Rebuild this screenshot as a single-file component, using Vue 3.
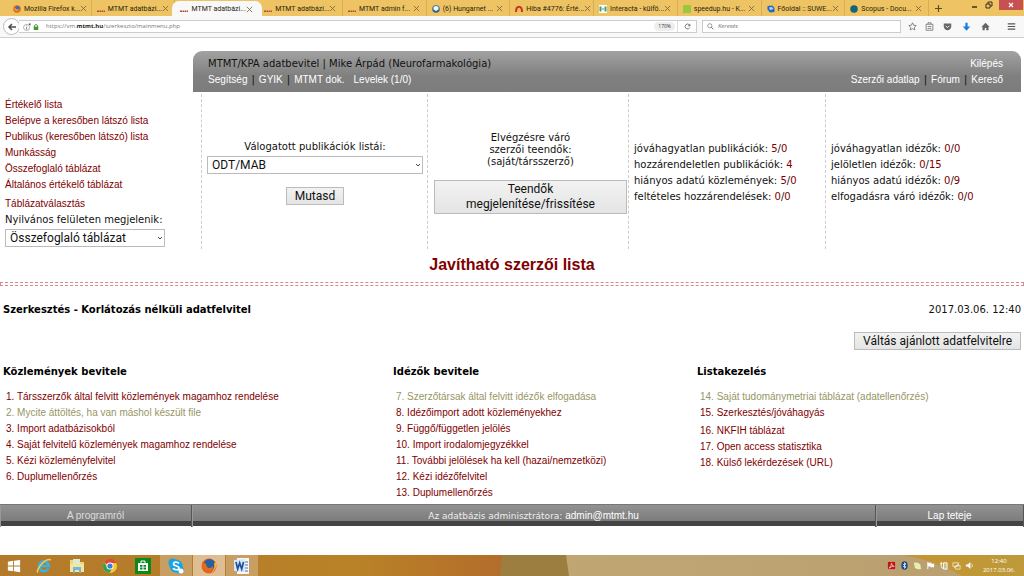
<script setup>
import { ref } from 'vue'

const tabs = [
  { icon: 'firefox', title: 'Mozilla Firefox k...' },
  { icon: 'mtmt', title: 'MTMT adatbázi...' },
  { icon: 'mtmt', title: 'MTMT adatbázi...', active: true },
  { icon: 'mtmt', title: 'MTMT adatbázi...' },
  { icon: 'mtmt', title: 'MTMT admin f...' },
  { icon: 'mail', title: '(6) Hungarnet ...' },
  { icon: 'redmine', title: 'Hiba #4776: Érté...' },
  { icon: 'interacta', title: 'Interacta - külfö...' },
  { icon: 'green', title: 'speedup.hu - K...' },
  { icon: 'suwe', title: 'Főoldal :: SUWE...' },
  { icon: 'scopus', title: 'Scopus - Docu...' },
]

const sideLinks = [
  'Értékelő lista',
  'Belépve a keresőben látszó lista',
  'Publikus (keresőben látszó) lista',
  'Munkásság',
  'Összefoglaló táblázat',
  'Általános értékelő táblázat',
]

const pubStats = [
  ['jóváhagyatlan publikációk:', '5', '0'],
  ['hozzárendeletlen publikációk:', '4'],
  ['hiányos adatú közlemények:', '5', '0'],
  ['feltételes hozzárendelések:', '0', '0'],
]
const citeStats = [
  ['jóváhagyatlan idézők:', '0', '0'],
  ['jelöletlen idézők:', '0', '15'],
  ['hiányos adatú idézők:', '0', '9'],
  ['elfogadásra váró idézők:', '0', '0'],
]

const menus = [
  {
    title: 'Közlemények bevitele',
    start: 1,
    items: [
      { text: 'Társszerzők által felvitt közlemények magamhoz rendelése' },
      { text: 'Mycite áttöltés, ha van máshol készült file', dim: true },
      { text: 'Import adatbázisokból' },
      { text: 'Saját felvitelű közlemények magamhoz rendelése' },
      { text: 'Kézi közleményfelvitel' },
      { text: 'Duplumellenőrzés' },
    ],
  },
  {
    title: 'Idézők bevitele',
    start: 7,
    items: [
      { text: 'Szerzőtársak által felvitt idézők elfogadása', dim: true },
      { text: 'Idézőimport adott közleményekhez' },
      { text: 'Függő/független jelölés' },
      { text: 'Import irodalomjegyzékkel' },
      { text: 'További jelölések ha kell (hazai/nemzetközi)' },
      { text: 'Kézi idézőfelvitel' },
      { text: 'Duplumellenőrzés' },
    ],
  },
  {
    title: 'Listakezelés',
    start: 14,
    items: [
      { text: 'Saját tudománymetriai táblázat (adatellenőrzés)', dim: true },
      { text: 'Szerkesztés/jóváhagyás' },
      { text: 'NKFIH táblázat', gap: true },
      { text: 'Open access statisztika' },
      { text: 'Külső lekérdezések (URL)' },
    ],
  },
]

const list = ref('ODT/MAB')
const table = ref('Összefoglaló táblázat')
</script>

<template>
  <div class="screen">
    <div class="tabbar">
      <div class="tabs">
        <div v-for="(t, i) in tabs" :key="i" class="tab" :class="{ active: t.active }">
          <svg class="fav" viewBox="0 0 16 16" aria-hidden="true">
            <template v-if="t.icon === 'firefox'">
              <circle cx="8" cy="8" r="7.5" fill="#e0661c" />
              <circle cx="9" cy="6.500" r="4.500" fill="#3a6fb5" />
              <path d="M1 5c3 0 4 2 6 3s4 2 6-1c0 5-6 7-9 4z" fill="#f0922a" />
            </template>
            <template v-else-if="t.icon === 'mtmt'">
              <path d="M0 11h4v3H0zM5 11h3v3H5zM9 11h3v3H9zM13 11h3v3h-3z" fill="#b5483c" />
            </template>
            <template v-else-if="t.icon === 'mail'">
              <circle cx="8" cy="8" r="7.500" fill="#2d6394" />
              <path d="M3 4q5-4 10 0v5L8 12 3 9z" fill="#f2f5f8" />
            </template>
            <template v-else-if="t.icon === 'redmine'">
              <path d="M2 14C2 0 14 0 14 14" fill="none" stroke="#c93422" stroke-width="4" />
            </template>
            <template v-else-if="t.icon === 'interacta'">
              <path d="M0 0h16v16H0z" fill="#fff" />
              <path d="M1 3h4v10H1zM11 3h4v10h-4z" fill="#4c9a6a" />
              <path d="M6 7h4v2H6z" fill="#4886b8" />
            </template>
            <template v-else-if="t.icon === 'green'">
              <path d="M0 0h16v16H0z" fill="#98c83c" />
            </template>
            <template v-else-if="t.icon === 'suwe'">
              <path d="M1 2l10-1 4 5v8l-9 1-5-6z" fill="#2468c0" />
              <path d="M4 5l6-1 3 4-7 2z" fill="#b8d4f0" />
            </template>
            <template v-else>
              <circle cx="8" cy="8" r="7.500" fill="#12647a" />
            </template>
          </svg>
          <span class="tabtitle">{{ t.title }}</span>
          <button class="plain" aria-label="Lap bezárása">
            <svg class="x" viewBox="0 0 8 8"><path d="M1 1l6 6M7 1L1 7" stroke="#7d6a3c" fill="none" /></svg>
          </button>
        </div>
      </div>
      <button class="plain newtab" aria-label="Új lap">
        <svg class="plus" viewBox="0 0 8 8"><path d="M4 0v8M0 4h8" stroke="#5d4c24" stroke-width="1.300" /></svg>
      </button>
      <div class="winctl">
        <button class="plain" aria-label="Kis méret">
          <svg class="wc" viewBox="0 0 8 8"><path d="M1 6h5" stroke="#3b3018" stroke-width="1.500" /></svg>
        </button>
        <button class="plain" aria-label="Előző méret">
          <svg class="wc" viewBox="0 0 8 8"><path d="M1 3h4v4H1zM3 3V1h4v4H5" stroke="#3b3018" fill="none" /></svg>
        </button>
        <button class="plain closewin" aria-label="Bezárás">
          <svg class="wc" viewBox="0 0 8 8"><path d="M2 2l4 4M6 2L2 6" stroke="#fff" stroke-width="1.200" /></svg>
        </button>
      </div>
    </div>

    <div class="toolbar">
      <button class="plain back" aria-label="Vissza">
        <svg viewBox="0 0 10 10"><path d="M9 5H2M5 2L2 5l3 3" stroke="#4c4c4c" stroke-width="1.500" fill="none" /></svg>
      </button>
      <div class="urlbar">
        <svg class="info" viewBox="0 0 10 10"><circle cx="4.500" cy="5.500" r="3.800" fill="none" stroke="#888" stroke-width=".8" /><path d="M4.500 5v3M4.500 3v1" stroke="#666" /><circle cx="8.500" cy="1.500" r="1.200" fill="#666" /></svg>
        <svg class="lock" viewBox="0 0 8 10"><path d="M2 5V3q2-3 4 0v2" fill="none" stroke="#3f9a32" stroke-width="1.300" /><path d="M1 4.500h6V9H1z" fill="#3f9a32" /></svg>
        <span class="url">https://vm.<b>mtmt.hu</b>/szerkeszto/mainmenu.php</span>
        <input class="urlinput" type="text" aria-label="Cím" />
        <button class="zoom">170%</button>
        <button class="plain reload" aria-label="Frissítés">
          <svg viewBox="0 0 10 10"><path d="M8 3A3.500 3.500 0 1 0 8.300 6.500" fill="none" stroke="#666" stroke-width="1.200" /><path d="M9 1v3.500H5.500z" fill="#666" /></svg>
        </button>
      </div>
      <div class="search">
        <svg viewBox="0 0 10 10"><circle cx="4" cy="4" r="3" fill="none" stroke="#777" /><path d="M6 6l3 3" stroke="#777" stroke-width="1.400" /></svg>
        <input type="text" placeholder="Keresés" aria-label="Keresés" />
      </div>
      <div class="tools">
        <button class="plain" aria-label="Könyvjelző"><svg viewBox="0 0 12 12"><path d="M6 1l1.500 3.300 3.500.4-2.600 2.400.7 3.500L6 8.900l-3.100 1.700.7-3.500L1 4.700l3.500-.4z" fill="none" stroke="#666" /></svg></button>
        <button class="plain" aria-label="Könyvjelzők"><svg viewBox="0 0 12 12"><path d="M1.500 3h9v8h-9zM4 3V1h4v2M3.500 6h5M3.500 8.500h5" fill="none" stroke="#666" /></svg></button>
        <button class="plain" aria-label="Pocket"><svg viewBox="0 0 12 12"><path d="M1 2h10v4q-1 5-5 5T1 6z" fill="#666" /><path d="M3.500 5L6 7.500 8.500 5" fill="none" stroke="#fff" stroke-width="1.200" /></svg></button>
        <button class="plain" aria-label="Letöltések"><svg viewBox="0 0 12 12"><path d="M4.500 1h3v5H11l-5 5.500L1 6h3.500z" fill="#1b7de0" /></svg></button>
        <button class="plain" aria-label="Kezdőlap"><svg viewBox="0 0 12 12"><path d="M6 1l5.500 5.500H10V11H7V8H5v3H2V6.500H.500z" fill="#666" /></svg></button>
        <button class="plain" aria-label="Menü"><svg viewBox="0 0 12 12"><path d="M1 2.500h10M1 6h10M1 9.500h10" stroke="#555" stroke-width="1.600" /></svg></button>
      </div>
    </div>

    <main class="page">
      <div class="top">
        <nav class="side">
          <a v-for="l in sideLinks" :key="l" href="#">{{ l }}</a>
          <a class="tablelink" href="#">Táblázatválasztás</a>
          <label for="tbl">Nyilvános felületen megjelenik:</label>
          <div class="selectwrap">
            <select id="tbl" v-model="table"><option>Összefoglaló táblázat</option></select>
            <svg viewBox="0 0 6 6"><path d="M1 2l2 2 2-2" fill="none" stroke="#444" /></svg>
          </div>
        </nav>

        <div class="right">
          <header class="head">
            <div class="hrow">
              <span>MTMT/KPA adatbevitel | Mike Árpád (Neurofarmakológia)</span>
              <a href="#">Kilépés</a>
            </div>
            <div class="hrow">
              <div class="hlinks">
                <a href="#">Segítség</a><i>|</i><a href="#">GYIK</a><i>|</i><a href="#">MTMT dok.</a><a class="mails" href="#">Levelek (1/0)</a>
              </div>
              <div class="hlinks">
                <a href="#">Szerzői adatlap</a><i>|</i><a href="#">Fórum</a><i>|</i><a href="#">Kereső</a>
              </div>
            </div>
          </header>

          <div class="panels">
            <section class="panel lists">
              <label for="lst">Válogatott publikációk listái:</label>
              <div class="selectwrap">
                <select id="lst" v-model="list"><option>ODT/MAB</option></select>
                <svg viewBox="0 0 6 6"><path d="M1 2l2 2 2-2" fill="none" stroke="#444" /></svg>
              </div>
              <button class="btn">Mutasd</button>
            </section>
            <section class="panel todo">
              <p>Elvégzésre váró<br />szerzői teendők:<br />(saját/társszerző)</p>
              <button class="btn">Teendők<br />megjelenítése/frissítése</button>
            </section>
            <section v-for="(group, g) in [pubStats, citeStats]" :key="g" class="panel stats">
              <div v-for="s in group" :key="s[0]">
                {{ s[0] }} <a href="#">{{ s[1] }}</a><template v-if="s[2]">/<a href="#">{{ s[2] }}</a></template>
              </div>
            </section>
          </div>
        </div>
      </div>

      <h1><a href="#">Javítható szerzői lista</a></h1>
      <div class="rule"></div>

      <div class="subhead">
        <h2>Szerkesztés - Korlátozás nélküli adatfelvitel</h2>
        <span>2017.03.06. 12:40</span>
      </div>
      <div class="switch"><button class="btn">Váltás ajánlott adatfelvitelre</button></div>

      <div class="menus">
        <section v-for="m in menus" :key="m.title">
          <h2>{{ m.title }}</h2>
          <div v-for="(it, i) in m.items" :key="i" class="item" :class="{ dim: it.dim, gap: it.gap }">
            <a href="#">{{ m.start + i }}. {{ it.text }}</a>
          </div>
        </section>
      </div>

      <footer class="foot">
        <a class="about" href="#">A programról</a>
        <div>Az adatbázis adminisztrátora: <a href="#">admin@mtmt.hu</a></div>
        <a href="#">Lap teteje</a>
      </footer>
    </main>

    <div class="taskbar">
      <svg class="wall" viewBox="0 0 1024 21" preserveAspectRatio="none" aria-hidden="true">
        <defs>
          <linearGradient id="w1"><stop offset="0" stop-color="#b37a2c" /><stop offset=".7" stop-color="#b98227" /><stop offset="1" stop-color="#b36c2b" /></linearGradient>
          <linearGradient id="w2"><stop offset="0" stop-color="#c0a673" /><stop offset="1" stop-color="#b99f70" /></linearGradient>
          <linearGradient id="w3"><stop offset="0" stop-color="#c5952e" /><stop offset="1" stop-color="#bd9a3b" /></linearGradient>
        </defs>
        <path d="M0 0h510v21H0z" fill="url(#w1)" />
        <path d="M502 0h70v21h-72z" fill="#9b7e40" />
        <path d="M566 0h458v21H569z" fill="url(#w2)" />
        <path d="M902 0h122v21h-62Q935 5 902 0z" fill="url(#w3)" />
      </svg>
      <div class="apps">
        <button class="plain start" aria-label="Start"><svg viewBox="0 0 16 16"><path d="M1 3l6-1v5.500H1zM8 2l7-1v6.500H8zM1 8.500h6V14l-6-1zM8 8.500h7V15l-7-1z" fill="#fff" /></svg></button>
        <button class="plain" aria-label="Internet Explorer"><svg viewBox="0 0 16 16"><path d="M12.500 10.500A5 5 0 1 1 13 8H4" fill="none" stroke="#36b4e8" stroke-width="2.600" /><path d="M2 14.500C-1 12 10-1 15 2" fill="none" stroke="#f2cd45" stroke-width="1.500" /></svg></button>
        <button class="plain" aria-label="Fájlkezelő"><svg viewBox="0 0 16 16"><path d="M1 2h5l1 2h8v10H1z" fill="#f0d77c" /><path d="M4 1h7v5H4z" fill="#d8edcf" /><path d="M1 6h14v8H1z" fill="#f7e49c" /><path d="M4 15V9h8v6h-2v-3H6v3z" fill="#6db9e0" /></svg></button>
        <button class="plain" aria-label="Chrome"><svg viewBox="0 0 16 16"><circle cx="8" cy="8" r="7" fill="#f7c92c" /><path d="M8 8L2 4.400A7 7 0 0 1 14.500 5H8z" fill="#dd4a3a" /><path d="M2 4.400A7 7 0 0 0 7.500 15L10.500 9.500 5.500 9.500z" fill="#30a350" /><circle cx="8" cy="8" r="3.500" fill="#fff" /><circle cx="8" cy="8" r="2.600" fill="#3d7de0" /></svg></button>
        <button class="plain" aria-label="Áruház"><svg viewBox="0 0 16 16"><path d="M0 0h16v16H0z" fill="#0b8a1c" /><path d="M3 5h10v8H3z" fill="#fff" /><path d="M6 5V3h4v2" fill="none" stroke="#fff" /><path d="M5 7h2.500v1.800H5zM8.500 7H11v1.800H8.500zM5 9.600h2.500v1.800H5zM8.500 9.600H11v1.800H8.500z" fill="#0b8a1c" /></svg></button>
        <button class="plain open" aria-label="Skype"><svg viewBox="0 0 16 16"><circle cx="8" cy="8" r="6.500" fill="#12a5e8" /><circle cx="4.500" cy="4.500" r="4" fill="#12a5e8" /><circle cx="11.500" cy="11.500" r="4" fill="#12a5e8" /><path d="M11 5.500C9.500 3.500 5.500 3.800 5.500 6c0 2.500 5.500 1.500 5.500 4 0 2.200-4.500 2.400-6 .3" fill="none" stroke="#fff" stroke-width="1.700" /><circle cx="13" cy="13" r="2.500" fill="#fff" /></svg></button>
        <button class="plain open current" aria-label="Firefox"><svg viewBox="0 0 16 16"><circle cx="8" cy="8" r="7.500" fill="#e2601c" /><circle cx="8.500" cy="6.500" r="5.500" fill="#285f9f" /><path d="M1 4c1 1 3 1 4 2s0 2 1 3 4 2 6-1c1 3-2 5-5 5-4 0-6-3-6-9z" fill="#e56a1e" /><path d="M15 5c1 5-2 9-6 10 4-2 5-6 4-10z" fill="#f6b63a" /></svg></button>
        <button class="plain open" aria-label="Word"><svg viewBox="0 0 16 16"><path d="M3 0h12v16H3z" fill="#f4f7fb" /><path d="M11 4h3M11 7h3M11 10h3M11 13h3" stroke="#4b72b0" /><path d="M0 2l11-1v13L0 13z" fill="#dbe6f5" /><path d="M2 4l1.700 7L5.700 5l2 6L9.500 4" fill="none" stroke="#1f4f9c" stroke-width="1.700" /></svg></button>
      </div>
      <div class="tray">
        <svg viewBox="0 0 10 10"><path d="M1 1h8v8H1z" fill="#c4141a" /><path d="M2.500 8Q5 5 5 2.500 5.500 6 8 6 5 5.500 2.500 8" fill="none" stroke="#fff" stroke-width=".7" /></svg>
        <svg viewBox="0 0 10 10"><ellipse cx="5" cy="5" rx="3.500" ry="4.800" fill="#174a80" /><path d="M3.300 3.300L6.600 6.600 5 8.200V1.800l1.600 1.600-3.300 3.300" fill="none" stroke="#fff" stroke-width=".8" /></svg>
        <svg viewBox="0 0 10 10"><path d="M1 2q5-1 7 2l1 5q-6 1-7-2z" fill="#e6f0b0" /></svg>
        <svg viewBox="0 0 10 10"><path d="M2 1v8" stroke="#fff" /><path d="M2 2h4v1h3v4H5V6H2z" fill="#fff" /></svg>
        <svg viewBox="0 0 10 10"><path d="M5 2h4v7H5z" fill="#c9bd9a" stroke="#fff" /><path d="M1 3h3M2.500 1v5q0 2 2 2" fill="none" stroke="#fff" /></svg>
        <svg viewBox="0 0 10 10"><path d="M1 2h6v4H1zM4 5h5v4H4z" fill="none" stroke="#eee3c5" /><path d="M2 8l6-6" stroke="#eee3c5" /></svg>
        <svg viewBox="0 0 10 10"><path d="M1 4h2l3-3v8L3 6H1z" fill="#fff" /><path d="M7.500 3q1.500 2 0 4" fill="none" stroke="#fff" stroke-width=".8" /></svg>
      </div>
      <div class="clock"><span>12:40</span><span>2017.03.06.</span></div>
    </div>
  </div>
</template>

<style>
body {
  margin: 0;
  background: #fff;
}
</style>

<style scoped>
.screen {
  display: flex;
  flex-direction: column;
  min-height: 100vh;
  font-family: "DejaVu Sans", Verdana, sans-serif;
  font-size: 10px;
  line-height: 16px;
  color: #111;
  background: #fff;
}
svg {
  display: block;
  flex: none;
}
a {
  color: #800000;
  font-family: "Liberation Sans", Arial, sans-serif;
  text-decoration: none;
}
.plain {
  display: flex;
  align-items: center;
  justify-content: center;
  border: 0;
  padding: 0;
  background: none;
}

/* Browser tabs */
.tabbar {
  display: flex;
  height: 16px;
  padding-left: 8px;
  background: #edc363;
  font: 7px/16px Roboto, "Noto Sans", sans-serif;
}
.tabs {
  flex: 1;
  min-width: 0;
  display: grid;
  grid-template-columns: repeat(11, 1fr);
}
.tab {
  display: flex;
  align-items: center;
  min-width: 0;
  padding: 0 6px 0 5px;
  box-sizing: border-box;
  border-right: 1px solid #d9ae51;
  color: #2c230e;
}
.tab.active {
  background: #f8f8f8;
  border-color: #f8f8f8;
  border-radius: 7px 7px 0 0;
  margin: 1px -3px 0;
  padding: 0 9px 0 8px;
}
.fav {
  width: 8px;
  height: 8px;
}
.tabtitle {
  flex: 1;
  margin-left: 3px;
  white-space: nowrap;
}
.x {
  width: 7px;
  height: 7px;
}
.newtab {
  width: 18px;
}
.plus {
  width: 7px;
  height: 7px;
}
.winctl {
  display: flex;
  align-items: flex-start;
  margin-left: 21px;
}
.winctl button {
  width: 14px;
  height: 10px;
}
.winctl .closewin {
  width: 24px;
  margin: 0 1px 0 3px;
  background: #c75050;
}
.wc {
  width: 8px;
  height: 8px;
}

/* Navigation bar */
.toolbar {
  display: flex;
  align-items: center;
  height: 22px;
  box-sizing: border-box;
  padding: 0 5px 0 3px;
  background: #f8f8f8;
  border-bottom: 1px solid #cfcfcf;
  font: 6px/11px "Open Sans", "Noto Sans", sans-serif;
}
.back {
  width: 17px;
  height: 17px;
  box-sizing: border-box;
  border: 1px solid #bbb;
  border-radius: 50%;
  background: #fff;
}
.back svg {
  width: 10px;
  height: 10px;
}
.urlbar,
.search {
  position: relative;
  display: flex;
  align-items: center;
  height: 13px;
  box-sizing: border-box;
  border: 1px solid #ccc;
  background: #fff;
}
.urlbar {
  flex: 1;
  margin-left: -1px;
  border-left: 0;
}
.info {
  width: 8px;
  height: 8px;
  margin-left: 4px;
}
.lock {
  width: 6px;
  height: 8px;
  margin: 0 7px 0 2px;
}
.url {
  flex: 1;
  color: #777;
  font-size: 6px;
}
.url b {
  color: #222;
}
.urlinput {
  position: absolute;
  inset: 0 50px 0 26px;
  border: 0;
  padding: 0;
  background: none;
}
.zoom {
  border: 0;
  padding: 0 4px;
  margin-right: 2px;
  border-radius: 5px;
  background: #eee;
  color: #333;
  font: 5px/9px "Open Sans", sans-serif;
}
.reload {
  width: 19px;
  height: 11px;
  border-left: 1px solid #ddd;
}
.reload svg,
.search svg {
  width: 7px;
  height: 7px;
}
.search {
  width: 20%;
  max-width: 199px;
  margin-left: 5px;
  padding: 0 4px;
  gap: 4px;
}
.search input {
  flex: 1;
  min-width: 0;
  border: 0;
  padding: 0;
  outline: 0;
  background: none;
  font: italic 6px/11px "Open Sans", sans-serif;
}
.tools {
  display: grid;
  grid-template-columns: 18px 17px 19px 19px 19px 24px;
  margin-left: 2px;
}
.tools svg {
  width: 9px;
  height: 9px;
}
.tools button:last-child {
  padding-left: 8px;
}

/* Page header and side links */
.page {
  flex: 1;
  padding-top: 13px;
}
.top {
  display: flex;
  padding: 0 3px 0 5px;
}
.side {
  display: flex;
  flex-direction: column;
  align-items: flex-start;
  flex: 0 0 188px;
  padding-top: 46px;
}
.side .tablelink {
  margin-top: 3px;
}
.selectwrap {
  position: relative;
}
.selectwrap svg {
  position: absolute;
  right: 2px;
  top: 6px;
  width: 6px;
  height: 6px;
  pointer-events: none;
}
select {
  display: block;
  width: 160px;
  height: 18px;
  box-sizing: border-box;
  appearance: none;
  border: 1px solid #bbb;
  border-radius: 0;
  padding: 0 10px 0 4px;
  background: #fff;
  color: #111;
  font: 12px/16px Roboto, "Noto Sans", sans-serif;
}
.side .selectwrap {
  margin-top: 1px;
}
.right {
  flex: 1;
  min-width: 0;
  display: flex;
  flex-direction: column;
}
.head {
  box-sizing: border-box;
  padding: 5px 18px 4px 15px;
  border-radius: 9px 9px 0 0;
  background: linear-gradient(#a2a2a2, #808080 60%, #7c7c7c);
}
.hrow {
  display: flex;
  justify-content: space-between;
}
.head a {
  color: #fff;
}
.hlinks {
  display: flex;
}
.hlinks i {
  margin: 0 4px;
  font-style: normal;
}
.mails {
  margin-left: 9px;
}
.panels {
  flex: 1;
  display: grid;
  grid-template-columns: 226fr 201fr 197fr 196fr;
  margin: 2px 0 0 8px;
  min-height: 155px;
}
.panel {
  display: flex;
  flex-direction: column;
  justify-content: center;
  min-width: 0;
  border-left: 1px dashed #ccc;
}
.lists {
  align-items: center;
  padding: 0 4px 0 5px;
}
.lists .selectwrap,
.lists select {
  width: 100%;
}
.lists .selectwrap {
  margin: 1px 0 13px;
}
.todo {
  padding: 2px 1px 0 6px;
  text-align: center;
}
.todo p {
  margin: 0 0 12px;
  line-height: 12px;
}
.stats {
  padding: 2px 0 0 5px;
}
.stats a {
  font-family: inherit;
}
.btn {
  border: 1px solid #bbb;
  border-radius: 0;
  padding: 0 8px;
  background: linear-gradient(#f2f2f2, #e4e4e4);
  color: #111;
  font: 12px/16px Roboto, "Noto Sans", sans-serif;
}
.todo .btn {
  line-height: 15px;
  padding: 1px 8px;
}

/* Author list heading and menu */
h1 {
  margin: 6px 0 7px;
  text-align: center;
  font-size: 16px;
  line-height: 20px;
}
.rule {
  height: 2px;
  border: 1px dashed #dd8888;
}
h2 {
  margin: 0;
  font-size: 10px;
  line-height: 16px;
  color: #000;
}
.subhead {
  display: flex;
  justify-content: space-between;
  padding: 16px 3px 0;
}
.switch {
  display: flex;
  justify-content: flex-end;
  margin: 14px 3px 0;
}
.menus {
  display: grid;
  grid-template-columns: 390fr 304fr 327fr;
  padding: 14px 0 3px 3px;
}
.item {
  padding-left: 3px;
}
.menus h2 {
  margin-bottom: 9px;
}
.item.gap {
  margin-top: 2px;
}
.dim a {
  color: #969664;
}

/* Page footer */
.foot {
  display: grid;
  grid-template-columns: 192fr 684fr 148fr;
  height: 16px;
  border-bottom: 5px solid #444;
  background: linear-gradient(#929292, #7c7c7c);
  border-top: 1px solid #777;
  color: #eee;
  font-size: 9px;
  line-height: 21px;
  text-align: center;
}
.foot > * {
  border-right: 1px solid #555;
  box-shadow: inset 1px 0 #999;
}
.foot a {
  color: #fff;
  font-size: 10px;
}
.foot .about {
  color: #ddd;
}

/* Desktop taskbar */
.taskbar {
  position: relative;
  display: flex;
  height: 21px;
}
.wall {
  position: absolute;
  inset: 0;
  width: 100%;
  height: 100%;
}
.apps {
  position: relative;
  flex: 1;
  display: flex;
  gap: 1px;
}
.apps button {
  width: 32px;
}
.apps .start {
  width: 27px;
}
.apps svg {
  width: 16px;
  height: 16px;
}
.apps .start svg {
  width: 14px;
  height: 14px;
}
.apps .open {
  background: #c99e62;
}
.apps .current {
  background: #dfbd93;
}
.tray {
  position: relative;
  display: flex;
  align-items: center;
  gap: 4px;
}
.tray svg {
  width: 9px;
  height: 9px;
}
.clock {
  position: relative;
  display: flex;
  flex-direction: column;
  justify-content: center;
  width: 50px;
  text-align: center;
  color: #fff;
  font: 6px/9px "Open Sans", "Noto Sans", sans-serif;
}
</style>
